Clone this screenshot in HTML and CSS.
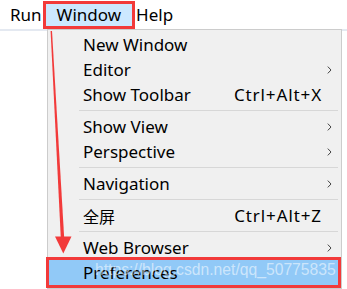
FILE: index.html
```html
<!DOCTYPE html>
<html lang="en">
<head>
    <title>Window menu</title>
    <link rel="stylesheet" href="styles.css">
</head>
<body>
    <div class="menubar">
        <div class="menubar-item">Run</div>
        <div class="menubar-item open marked">Window</div>
        <div class="menubar-item">Help</div>
    </div>

    <ul class="dropdown">
        <li class="menu-item"><span>New Window</span></li>
        <li class="menu-item"><span>Editor</span><span></span><svg class="chev" viewBox="0 0 5 8"><path d="M0.8 0.6 L4 4 L0.8 7.4"/></svg></li>
        <li class="menu-item"><span>Show Toolbar</span><span class="key">Ctrl+Alt+X</span></li>
        <li class="sep"></li>
        <li class="menu-item"><span>Show View</span><span></span><svg class="chev" viewBox="0 0 5 8"><path d="M0.8 0.6 L4 4 L0.8 7.4"/></svg></li>
        <li class="menu-item"><span>Perspective</span><span></span><svg class="chev" viewBox="0 0 5 8"><path d="M0.8 0.6 L4 4 L0.8 7.4"/></svg></li>
        <li class="sep"></li>
        <li class="menu-item"><span>Navigation</span><span></span><svg class="chev" viewBox="0 0 5 8"><path d="M0.8 0.6 L4 4 L0.8 7.4"/></svg></li>
        <li class="sep"></li>
        <li class="menu-item"><span class="cjk">全屏</span><span class="key">Ctrl+Alt+Z</span></li>
        <li class="sep"></li>
        <li class="menu-item"><span>Web Browser</span><span></span><svg class="chev" viewBox="0 0 5 8"><path d="M0.8 0.6 L4 4 L0.8 7.4"/></svg></li>
        <li class="menu-item active marked"><span>Preferences</span></li>
    </ul>

    <!-- annotation arrow drawn over the menu -->
    <svg class="annotation" width="347" height="289" viewBox="0 0 347 289">
        <polygon points="50.6,31 52,31 64.2,238 60.8,238" fill="#f23a3a"/>
        <polygon points="55,236.5 71.5,236.5 63.3,253.5" fill="#f23a3a"/>
    </svg>

    <div class="watermark">https://blog.csdn.net/qq_50775835</div>
</body>
</html>
```

FILE: styles.css
```css
body {
    margin: 0;
    background-color: white;
    font-family: "Noto Sans", "Noto Sans CJK SC", sans-serif;
    font-size: 17px;
    color: black;
}

.menubar {
    display: flex;
    align-items: center;
    gap: 4px;
    height: 31px;
    box-sizing: border-box;
    padding: 2px 0 2px 10px;
    border-bottom: 2px solid #e4e9f1;
}
.menubar-item {
    height: 22px;
    line-height: 22px;
}
.menubar-item.open {
    padding: 0 11px;
    background-color: #cce8ff;
}

.marked {
    outline: 3px solid #f23a3a;
}

.dropdown {
    position: absolute;
    left: 47px;
    top: 29px;
    width: 295px;
    box-sizing: border-box;
    margin: 0;
    padding: 2px 3px 3px 1px;
    list-style: none;
    background-color: #f0f0f0;
    border: 1px solid #cccccc;
}
.menu-item {
    display: grid;
    grid-template-columns: 1fr auto 16px;
    align-items: center;
    height: 25px;
    padding-left: 34px;
}
.menu-item.active {
    background-color: #91c9f7;
}
.key {
    text-align: right;
    letter-spacing: 0.9px;
}
.chev {
    width: 5px;
    height: 8px;
    margin-left: 5px;
    fill: none;
    stroke: #444;
    stroke-width: 1;
}
.cjk {
    font-family: "Noto Sans CJK SC", sans-serif;
    font-size: 16px;
}

.sep {
    height: 7px;
    margin-left: 30px;
    display: flex;
    align-items: center;
}
.sep::before {
    content: "";
    flex: 1;
    height: 1px;
    background-color: #d7d7d7;
}

.annotation {
    position: absolute;
    left: 0;
    top: 0;
    pointer-events: none;
}

.watermark {
    position: absolute;
    left: 95px;
    top: 261px;
    font-family: "Liberation Sans", sans-serif;
    font-size: 15.7px;
    color: rgba(255, 255, 255, 0.55);
}
```
